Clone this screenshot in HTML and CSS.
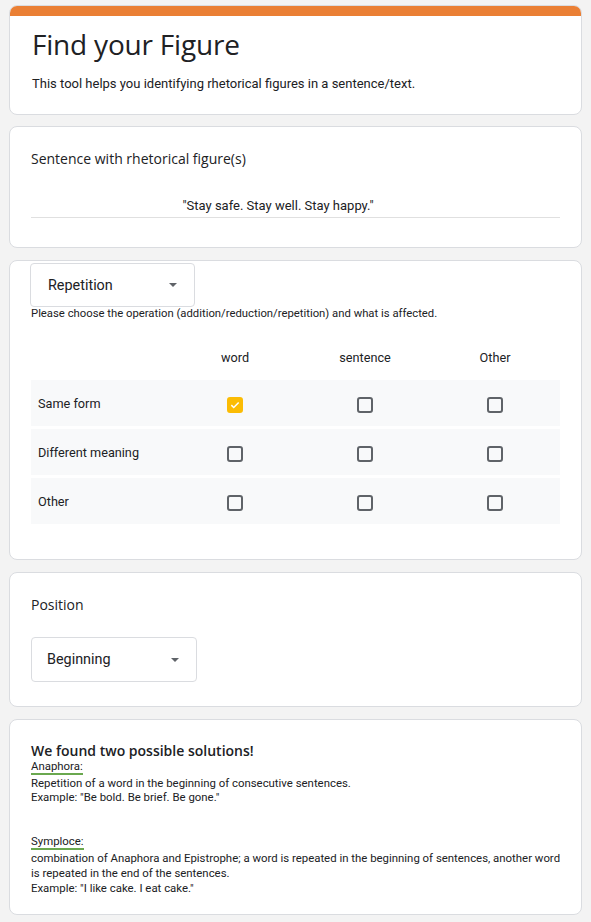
FILE: index.html
```html
<!DOCTYPE html>
<html>
<head>
<meta charset="utf-8">
<link rel="stylesheet" href="styles.css">
</head>
<body>
<main class="form">
  <section class="card card-head">
    <div class="accent"></div>
    <div class="head-body">
      <h1 class="title">Find your Figure</h1>
      <p class="desc">This tool helps you identifying rhetorical figures in a sentence/text.</p>
    </div>
  </section>

  <section class="card card-sentence">
    <h2 class="q-label">Sentence with rhetorical figure(s)</h2>
    <div class="sentence">"Stay safe. Stay well. Stay happy."</div>
  </section>

  <section class="card card-grid">
    <div class="select select-op">
      <span>Repetition</span>
      <span class="caret"></span>
    </div>
    <p class="help">Please choose the operation (addition/reduction/repetition) and what is affected.</p>
    <div class="grid">
      <div class="grid-head">
        <span></span>
        <span>word</span>
        <span>sentence</span>
        <span>Other</span>
      </div>
      <div class="grid-row">
        <span class="row-label">Same form</span>
        <span class="cell"><span class="box checked"><svg viewBox="0 0 18 18" width="14" height="14"><path d="M3.5 9.2l3.6 3.5 7.4-7.6" fill="none" stroke="#fff" stroke-width="2.2"/></svg></span></span>
        <span class="cell"><span class="box"></span></span>
        <span class="cell"><span class="box"></span></span>
      </div>
      <div class="grid-row">
        <span class="row-label">Different meaning</span>
        <span class="cell"><span class="box"></span></span>
        <span class="cell"><span class="box"></span></span>
        <span class="cell"><span class="box"></span></span>
      </div>
      <div class="grid-row">
        <span class="row-label">Other</span>
        <span class="cell"><span class="box"></span></span>
        <span class="cell"><span class="box"></span></span>
        <span class="cell"><span class="box"></span></span>
      </div>
    </div>
  </section>

  <section class="card card-position">
    <h2 class="q-label">Position</h2>
    <div class="select select-pos">
      <span>Beginning</span>
      <span class="caret"></span>
    </div>
  </section>

  <section class="card card-result">
    <h3 class="result-title">We found two possible solutions!</h3>
    <div class="solution">
      <span class="sol-name">Anaphora:</span>
      <p>Repetition of a word in the beginning of consecutive sentences.<br>Example: "Be bold. Be brief. Be gone."</p>
    </div>
    <div class="solution second">
      <span class="sol-name">Symploce:</span>
      <p class="long">combination of Anaphora and Epistrophe; a word is repeated in the beginning of sentences, another word is repeated in the end of the sentences.<br>Example: "I like cake. I eat cake."</p>
    </div>
  </section>
</main>
</body>
</html>
```

FILE: styles.css
```css
* { box-sizing: border-box; }
html, body { margin: 0; padding: 0; }
body {
  background: #f3f3f3;
  font-family: Roboto, "Liberation Sans", sans-serif;
  color: #202124;
}
.form {
  width: 573px;
  margin-left: 9px;
  padding-top: 5px;
  display: flex;
  flex-direction: column;
  gap: 12px;
}
.card {
  background: #fff;
  border: 1px solid #dadce0;
  border-radius: 8px;
  padding: 0 21px 0 21px;
}
.card-head { padding: 0; overflow: hidden; height: 110px; margin-bottom: -1px; }
.accent { height: 10px; background: #ea7f34; }
.head-body { padding: 8px 22px 0 22px; }
.title {
  margin: 0;
  font-family: "Open Sans", sans-serif;
  font-weight: 400;
  font-size: 28px;
  line-height: 40px;
  letter-spacing: -0.2px;
}
.desc {
  margin: 11px 0 0;
  font-size: 13px;
  line-height: 18px;
}
.q-label {
  margin: 0;
  font-family: "Open Sans", sans-serif;
  font-weight: 400;
  font-size: 14px;
  line-height: 20px;
}
.card-sentence { height: 122px; padding-top: 22px; }
.sentence {
  margin-top: 27px;
  border-bottom: 1px solid #e0e0e0;
  text-align: center;
  font-size: 13px;
  line-height: 20px;
  padding-bottom: 1px;
  padding-right: 35px;
}
.card-grid { height: 300px; padding-top: 2px; }
.select {
  display: flex;
  align-items: center;
  justify-content: space-between;
  border: 1px solid #dadce0;
  border-radius: 4px;
  font-size: 14.4px;
  color: #202124;
}
.select-op { width: 165px; height: 44px; padding: 0 17px 0 17px; margin-left: -1px; }
.select-pos { width: 166px; height: 45px; padding: 0 17px 0 15px; margin-top: 22px; }
.caret {
  width: 0; height: 0;
  border-left: 4px solid transparent;
  border-right: 4px solid transparent;
  border-top: 4px solid #5f6368;
}
.help {
  margin: 0;
  font-size: 11.3px;
  line-height: 13px;
}
.grid { margin-top: 30px; }
.grid-head, .grid-row {
  display: grid;
  grid-template-columns: 139px 130px 130px 130px;
}
.grid-head {
  font-size: 12.7px;
  height: 30px;
  align-items: start;
}
.grid-head span { text-align: center; }
.grid-row {
  background: #f8f9fa;
  height: 46px;
  align-items: center;
  margin-bottom: 3px;
  font-size: 12.7px;
}
.row-label { padding-left: 7px; }
.cell { display: flex; justify-content: center; padding-top: 3px; }
.box {
  width: 16px; height: 16px;
  border: 2px solid #5f6368;
  border-radius: 3px;
  display: flex;
  align-items: center;
  justify-content: center;
}
.box.checked { background: #fbbc04; border-color: #fbbc04; }
.card-position { height: 135px; padding-top: 22px; }
.card-result { height: 196px; padding-top: 22px; }
.result-title {
  margin: 0;
  font-family: "Open Sans", sans-serif;
  font-weight: 600;
  font-size: 14px;
  line-height: 17px;
}
.solution { font-size: 11.4px; line-height: 14px; }
.sol-name {
  display: inline-block;
  border-bottom: 2px solid #6aa84f;
  line-height: 13px;
}
.solution p { margin: 1px 0 0; }
.solution.second { margin-top: 30px; }
.solution p.long { line-height: 15px; margin-right: -8px; }
```
